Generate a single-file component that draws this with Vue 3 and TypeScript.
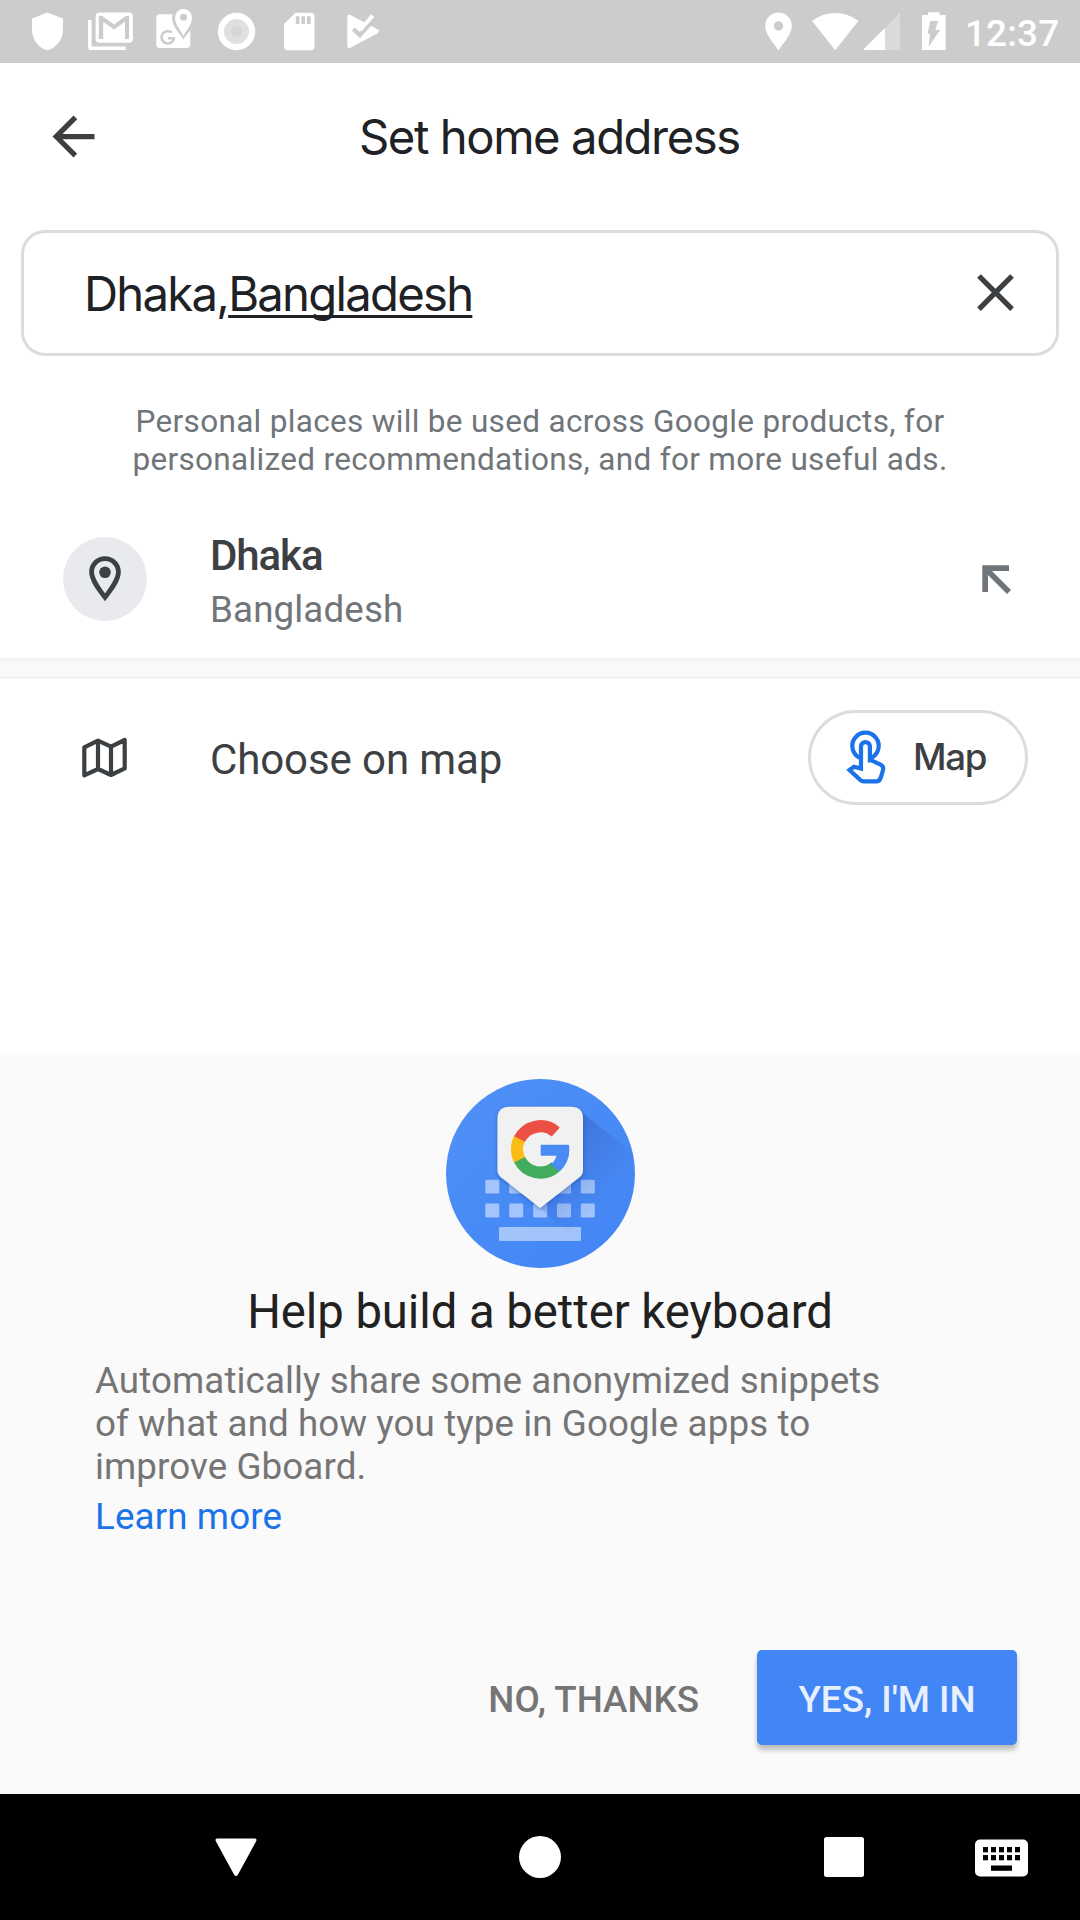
<script setup lang="ts">
const keyColumns: number[] = [39.3, 63.2, 87.2, 111, 134.8]
const keyRows: number[] = [100.8, 124.6]
const imeColumns: number[] = [8, 16, 24, 32, 40]
const snippet: string[] = [
  'Automatically share some anonymized snippets',
  'of what and how you type in Google apps to',
  'improve Gboard.',
]
</script>

<template>
  <div class="phone">
    <header class="status">
      <div class="notifications">
        <svg viewBox="0 0 63 63"><path d="M31.4 12.5 47 18.4V29.5C47 39.5 40.5 48 31.4 50.3 22.3 48 16 39.5 16 29.5V18.4Z" /></svg>
        <svg viewBox="0 0 63 63">
          <path d="M9 20h3.6v26.4H46.7V50H12Q9 50 9 47Z" />
          <rect x="16.6" y="12.5" width="37.3" height="30.2" rx="4" />
          <path class="cut" d="M19.8 39V16h3.4L35 24.4 46.8 16H50V39H46V21.7L35 29.5 24.2 21.7V39Z" />
        </svg>
        <svg viewBox="0 0 63 63">
          <rect x="14.3" y="14.3" width="34" height="33.8" rx="3.6" />
          <path class="cut" d="M41.5 39.5C38 33 30 27 30 17.5a11.5 11.5 0 0 1 23 0C53 27 45 33 41.5 39.5Z" />
          <path d="M41.5 36C39 30.5 33 25 33 17.5a8.5 8.5 0 0 1 17 0C50 25 44 30.5 41.5 36Z" />
          <circle class="cut" cx="41.5" cy="17.3" r="3.5" />
          <path class="g-line" d="M29.8 32.6A6.2 6.2 0 1 0 31.9 38.2H26" />
        </svg>
        <svg viewBox="0 0 63 63">
          <circle cx="31.5" cy="31.5" r="18.7" />
          <circle cx="31.5" cy="31.5" r="12.5" fill="#e0e0e0" />
          <circle cx="31.5" cy="31.5" r="5.7" fill="#d7d7d7" />
        </svg>
        <svg viewBox="0 0 63 63">
          <path d="M27.6 12.7H43Q46.5 12.7 46.5 16.2V46.6Q46.5 50.2 43 50.2H19.5Q16 50.2 16 46.6V24Z" />
          <path class="cut" d="M27.8 16.2h3.6v7.8h-3.6zM33.4 16.2H37v7.8h-3.6zM39 16.2h3.6v7.8H39z" />
        </svg>
        <svg viewBox="0 0 63 63">
          <path d="M16.3 17Q16.3 13.5 19.5 15L46.5 29.3Q49.5 31.2 46.5 33.2L19.5 47.8Q16.3 49.3 16.3 46Z" />
          <path class="check-cut" d="M22.3 29 28.8 35 43.5 18.3" />
          <path class="check" d="M28.8 30.3 41.8 15.6" />
        </svg>
      </div>
      <div class="system">
        <svg class="loc" viewBox="0 0 38 63"><path fill-rule="evenodd" d="M18.5 50.3C12.5 42 5.2 33.5 5.2 25.8a13.3 13.3 0 0 1 26.6 0C31.8 33.5 24.5 42 18.5 50.3ZM18.5 21.2a4.7 4.7 0 1 0 0 9.4 4.7 4.7 0 0 0 0-9.4Z" /></svg>
        <svg class="wifi" viewBox="0 0 47 63"><path d="M23.2 50.3 0 20.8Q10.5 13 23.2 13T46.5 20.8Z" /></svg>
        <svg class="signal" viewBox="0 0 38 63"><path fill="#dadada" d="M37 12.8V50H0Z" /><path d="M22 27.9V50H0Z" /></svg>
        <svg class="battery" viewBox="0 0 34 63">
          <path d="M5 15h6v-2.8h11.5V15h6.2v35H5Z" />
          <path class="cut" d="M13.3 21h7.7l-2.7 9h5L11.5 46.5l1.5-12.8H10.5Z" />
        </svg>
        <span class="clock">12:37</span>
      </div>
    </header>

    <main class="content">
      <div class="toolbar">
        <svg class="back" viewBox="0 0 24 24"><path d="M20 11H7.83l5.59-5.59L12 4l-8 8 8 8 1.41-1.41L7.83 13H20v-2z" /></svg>
        <h1>Set home address</h1>
      </div>

      <div class="search">
        <p><span>Dhaka,</span><span class="composing">Bangladesh</span></p>
        <svg class="clear" viewBox="0 0 24 24"><path d="M19 6.41 17.59 5 12 10.59 6.41 5 5 6.41 10.59 12 5 17.59 6.41 19 12 13.41 17.59 19 19 17.59 13.41 12z" /></svg>
      </div>

      <p class="disclosure">
        Personal places will be used across Google products, for<br />
        personalized recommendations, and for more useful ads.
      </p>

      <div class="suggestion">
        <svg class="pin" viewBox="0 0 84 84">
          <circle cx="42" cy="42" r="42" fill="#e8eaed" />
          <path d="M42 60.3C36 52.5 28.6 43 28.6 35a13.4 13.4 0 0 1 26.8 0C55.4 43 48 52.5 42 60.3Z" fill="none" stroke="#3c4043" stroke-width="4.8" />
          <circle cx="42" cy="35.3" r="5.8" fill="#3c4043" />
        </svg>
        <div class="labels">
          <strong>Dhaka</strong>
          <span>Bangladesh</span>
        </div>
        <svg class="insert" viewBox="0 0 30 30"><path d="M.3.3H27V6H10L29 25 25 29 6 10V27H.3Z" /></svg>
      </div>

      <div class="divider"></div>

      <div class="choose">
        <svg class="map-icon" viewBox="0 0 63 63"><path d="M11.3 21.3 25 14.6 38 20.7 51.7 14V42.4L38 49 25 43 11.3 49.3ZM25 14.6V43M38 20.7V49" /></svg>
        <span class="choose-label">Choose on map</span>
        <button class="map-btn">
          <svg viewBox="0 0 46 58">
            <path d="M17 29.9A13.2 13.2 0 1 1 28 29.9" />
            <path d="M18 40.6V18.5a4.4 4.4 0 0 1 8.9 0V32.5H29L37.5 36.5Q41 38.5 40 42L37.8 49.5Q36.5 53.3 33.5 53.3H20.8Q19 53.3 17.2 51.9L6.5 42 11 38.8Z" />
          </svg>
          <span>Map</span>
        </button>
      </div>
    </main>

    <section class="sheet">
      <svg class="logo" viewBox="0 0 189 189">
        <defs>
          <linearGradient id="disc" x1="0" y1="0" x2="1" y2="1"><stop offset="0" stop-color="#4f90f7" /><stop offset="1" stop-color="#4285f4" /></linearGradient>
          <linearGradient id="cast" gradientUnits="userSpaceOnUse" x1="105" y1="75" x2="156" y2="121"><stop offset="0" stop-color="#2f4fa8" stop-opacity=".36" /><stop offset="1" stop-color="#2f4fa8" stop-opacity="0" /></linearGradient>
          <clipPath id="round"><circle cx="94.5" cy="94.5" r="94.5" /></clipPath>
          <filter id="soft" x="-20%" y="-20%" width="140%" height="140%"><feDropShadow dx="0" dy="1.5" stdDeviation="2" flood-color="#173f91" flood-opacity=".45" /></filter>
        </defs>
        <circle cx="94.5" cy="94.5" r="94.5" fill="url(#disc)" />
        <g fill="#fff" fill-opacity=".5">
          <template v-for="y in keyRows" :key="y">
            <rect v-for="x in keyColumns" :key="x" :x="x" :y="y" width="14" height="13.8" rx="1.2" />
          </template>
          <rect x="53" y="148" width="82" height="14" rx="1.2" />
        </g>
        <path d="M133 31 220 100V240L94 129Z" fill="url(#cast)" clip-path="url(#round)" />
        <path filter="url(#soft)" fill="#f1f1f1" d="M63.5 27.7H125Q137 27.7 137 39.7V91Q137 95.5 133.5 98.3L94.2 129 55 98.3Q51.5 95.5 51.5 91V39.7Q51.5 27.7 63.5 27.7Z" />
        <g fill="none" stroke-width="12.2">
          <path stroke="#fbbc15" d="M74.2 58.5A23.3 23.3 0 0 0 74.2 82" />
          <path stroke="#ec4f43" d="M73.6 60.1A23.3 23.3 0 0 1 109.8 53" />
          <path stroke="#41ac5c" d="M73.6 80.8A23.3 23.3 0 0 0 109.6 87.9" />
        </g>
        <path fill="#4a8af4" d="M94.7 65.7H122.8Q123.3 68 123.3 70.3A29.3 29.3 0 0 1 113.7 92.5L104.5 85.6A17 17 0 0 0 110.6 76.8H94.7Z" />
      </svg>
      <h2>Help build a better keyboard</h2>
      <p class="explain"><span v-for="line in snippet" :key="line">{{ line }}</span></p>
      <a class="learn">Learn more</a>
      <div class="actions">
        <button class="no">NO, THANKS</button>
        <button class="yes">YES, I'M IN</button>
      </div>
    </section>

    <nav class="navbar">
      <svg class="nav-back" viewBox="0 0 42 42"><path d="M2.5 2.5H39.5Q42.5 2.5 41 5.5L23 38.5Q21 41.5 19 38.5L1 5.5Q-.5 2.500 2.5 2.5Z" /></svg>
      <svg class="nav-home" viewBox="0 0 42 42"><circle cx="21" cy="21" r="21" /></svg>
      <svg class="nav-recent" viewBox="0 0 42 42"><rect x="1" y="1" width="40" height="40" rx="2.5" /></svg>
      <svg class="nav-ime" viewBox="0 0 53 38">
        <rect x="0" y=".5" width="53" height="37" rx="5" />
        <g fill="#000">
          <rect v-for="x in imeColumns" :key="'a' + x" :x="x" y="8" width="5" height="5.3" />
          <rect v-for="x in imeColumns" :key="'b' + x" :x="x" y="16" width="5" height="5.3" />
          <rect x="16" y="26.5" width="21" height="5.3" />
        </g>
      </svg>
    </nav>
  </div>
</template>

<style>
body {
  margin: 0;
}
</style>

<style scoped>
.phone {
  width: 1080px;
  height: 1920px;
  display: flex;
  flex-direction: column;
  background: #fff;
  font-family: Roboto, 'Liberation Sans', sans-serif;
  overflow: hidden;
}
svg {
  display: block;
  flex: none;
}
p, h1, h2 {
  margin: 0;
  font-weight: 400;
  white-space: nowrap;
}
button {
  border: 0;
  padding: 0;
  margin: 0;
  background: none;
  font-family: inherit;
  white-space: nowrap;
}
.status {
  height: 63px;
  flex: none;
  display: flex;
  justify-content: space-between;
  background: #ccc;
}
.status svg {
  height: 63px;
  fill: #fff;
}
.status .cut {
  fill: #ccc;
}
.notifications {
  display: flex;
  padding-left: 16px;
}
.notifications svg {
  width: 63px;
}
.g-line {
  fill: none;
  stroke: #ccc;
  stroke-width: 2.5px;
}
.check-cut {
  fill: none;
  stroke: #ccc;
  stroke-width: 4.4px;
}
.check {
  fill: none;
  stroke: #fff;
  stroke-width: 4px;
}
.system {
  display: flex;
  width: 320px;
}
.loc {
  width: 38px;
}
.wifi {
  width: 47px;
  margin-left: 14px;
}
.signal {
  width: 38px;
  margin-left: 4px;
}
.battery {
  width: 34px;
  margin-left: 16px;
}
.clock {
  margin-left: 14px;
  font-size: 36.75px;
  font-weight: 500;
  line-height: 68px;
  letter-spacing: 0.2px;
  color: #fff;
}
.content {
  height: 990px;
  flex: none;
  display: flex;
  flex-direction: column;
}
.toolbar {
  height: 147px;
  display: flex;
  align-items: center;
  padding-left: 42px;
}
.back {
  width: 63px;
  height: 63px;
  fill: #3c4043;
}
h1 {
  margin-left: 254px;
  font: 400 47.25px/56px Inter, sans-serif;
  letter-spacing: -1.45px;
  color: #202124;
}
.search {
  box-sizing: border-box;
  height: 126px;
  margin: 20px 21px 0;
  border: 3px solid #dadce0;
  border-radius: 24px;
  display: flex;
  align-items: center;
  justify-content: space-between;
  padding: 0 29px 0 60px;
}
.search p {
  padding-top: 2px;
  font: 400 47.25px/56px Inter, sans-serif;
  letter-spacing: -1.75px;
  color: #202124;
}
.composing {
  text-decoration: underline;
  text-decoration-thickness: 3px;
  text-underline-offset: 4px;
  text-decoration-skip-ink: none;
}
.clear {
  width: 63px;
  height: 63px;
  margin-bottom: 1px;
  fill: #3c4043;
}
.disclosure {
  margin-top: 47px;
  text-align: center;
  font-size: 31.5px;
  line-height: 38px;
  letter-spacing: 0.32px;
  color: #70757a;
}
.suggestion {
  display: flex;
  align-items: flex-start;
  height: 121px;
  margin-top: 58px;
  padding: 0 68px 0 63px;
}
.pin {
  width: 84px;
  height: 84px;
}
.labels {
  flex: 1;
  display: flex;
  flex-direction: column;
  margin: -6px 0 0 63px;
}
.labels strong {
  font-size: 42px;
  font-weight: 500;
  line-height: 50px;
  letter-spacing: -1.1px;
  color: #3c4043;
}
.labels span {
  margin-top: 7px;
  font-size: 36.75px;
  line-height: 44px;
  letter-spacing: 0.12px;
  color: #70757a;
}
.insert {
  width: 30px;
  height: 30px;
  margin-top: 28px;
  fill: #70757a;
}
.divider {
  box-sizing: border-box;
  height: 21px;
  border: solid #f1f3f4;
  border-width: 3px 0;
  background: #f8f9fb;
}
.choose {
  display: flex;
  align-items: center;
  height: 157px;
  padding: 0 52px 0 73px;
}
.map-icon {
  width: 63px;
  height: 63px;
}
.map-icon path {
  fill: none;
  stroke: #3c4043;
  stroke-width: 4.2px;
  stroke-linejoin: round;
}
.choose-label {
  flex: 1;
  margin-left: 74px;
  padding-top: 4px;
  font-size: 42px;
  line-height: 50px;
  letter-spacing: -0.1px;
  color: #3c4043;
}
.map-btn {
  box-sizing: border-box;
  width: 220px;
  height: 95px;
  border: 3px solid #dadce0;
  border-radius: 48px;
  display: flex;
  align-items: center;
  padding-left: 32px;
}
.map-btn svg {
  width: 46px;
  height: 58px;
  margin-bottom: 2px;
}
.map-btn path {
  fill: none;
  stroke: #1a73e8;
  stroke-width: 4.2px;
}
.map-btn span {
  margin-left: 24px;
  padding-bottom: 2px;
  font: 500 36.75px/44px Inter, sans-serif;
  letter-spacing: -1.3px;
  color: #3c4043;
}
.sheet {
  flex: 1;
  display: flex;
  flex-direction: column;
  background: #fafafa;
}
.logo {
  width: 189px;
  height: 189px;
  margin: 26px auto 0;
}
h2 {
  margin-top: 16px;
  text-align: center;
  font-size: 47.25px;
  line-height: 56px;
  letter-spacing: -0.05px;
  color: #212121;
}
.explain {
  display: flex;
  flex-direction: column;
  align-items: flex-start;
  margin: 19px 0 0 95px;
  font-size: 36.75px;
  line-height: 43px;
  letter-spacing: 0.09px;
  color: #757575;
}
.learn {
  align-self: flex-start;
  margin: 7px 0 0 95px;
  font-size: 36.75px;
  line-height: 43px;
  letter-spacing: 0.12px;
  color: #1a73e8;
}
.actions {
  display: flex;
  justify-content: flex-end;
  margin: 112px 63px 0 0;
}
.actions button {
  height: 95px;
  padding-top: 4px;
  font-size: 36.75px;
  font-weight: 500;
}
.actions .no {
  margin-right: 58px;
  color: #757575;
}
.yes {
  width: 260px;
  border-radius: 5px;
  background: #4285f4;
  color: #e8f0fe;
  box-shadow: 0 5px 5px rgba(0, 0, 0, 0.25);
}
.navbar {
  height: 126px;
  flex: none;
  display: flex;
  align-items: center;
  background: #000;
}
.navbar svg {
  fill: #fff;
}
.nav-back, .nav-home, .nav-recent {
  width: 42px;
  height: 42px;
}
.nav-back {
  margin-left: 215px;
}
.nav-home {
  margin-left: 262px;
}
.nav-recent {
  margin-left: 262px;
}
.nav-ime {
  width: 53px;
  height: 38px;
  margin: 2px 0 0 110px;
}
</style>
